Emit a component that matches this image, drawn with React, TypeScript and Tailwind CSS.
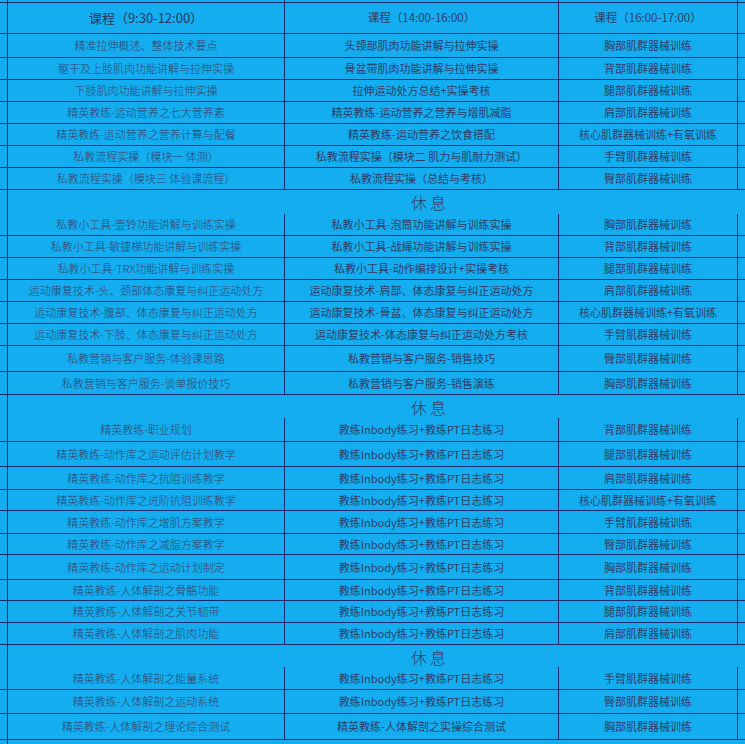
import React from 'react';

type Row = { kind: 'course'; h: number; a: string; b: string; c: string } | { kind: 'break'; h: number };

const GRID = 'grid grid-cols-[7px_276px_273px_178px_1fr] gap-x-px';

const course = (h: number, a: string, b: string, c: string): Row => ({ kind: 'course', h, a, b, c });
const rest = (h: number): Row => ({ kind: 'break', h });

const PT = '教练Inbody练习+教练PT日志练习';

const rows: Row[] = [
  course(24, '精准拉伸概述、整体技术要点', '头颈部肌肉功能讲解与拉伸实操', '胸部肌群器械训练'),
  course(22, '躯干及上肢肌肉功能讲解与拉伸实操', '骨盆带肌肉功能讲解与拉伸实操', '背部肌群器械训练'),
  course(22, '下肢肌肉功能讲解与拉伸实操', '拉伸运动处方总结+实操考核', '腿部肌群器械训练'),
  course(22, '精英教练-运动营养之七大营养素', '精英教练-运动营养之营养与增肌减脂', '肩部肌群器械训练'),
  course(22, '精英教练-运动营养之营养计算与配餐', '精英教练-运动营养之饮食搭配', '核心肌群器械训练+有氧训练'),
  course(22, '私教流程实操（模块一 体测）', '私教流程实操（模块二 肌力与肌耐力测试）', '手臂肌群器械训练'),
  course(22, '私教流程实操（模块三 体验课流程）', '私教流程实操（总结与考核）', '臀部肌群器械训练'),
  rest(24),
  course(22, '私教小工具-壶铃功能讲解与训练实操', '私教小工具-泡筒功能讲解与训练实操', '胸部肌群器械训练'),
  course(22, '私教小工具-敏捷梯功能讲解与训练实操', '私教小工具-战绳功能讲解与训练实操', '背部肌群器械训练'),
  course(22, '私教小工具-TRX功能讲解与训练实操', '私教小工具-动作编排设计+实操考核', '腿部肌群器械训练'),
  course(22, '运动康复技术-头、颈部体态康复与纠正运动处方', '运动康复技术-肩部、体态康复与纠正运动处方', '肩部肌群器械训练'),
  course(22, '运动康复技术-腹部、体态康复与纠正运动处方', '运动康复技术-骨盆、体态康复与纠正运动处方', '核心肌群器械训练+有氧训练'),
  course(22, '运动康复技术-下肢、体态康复与纠正运动处方', '运动康复技术-体态康复与纠正运动处方考核', '手臂肌群器械训练'),
  course(26, '私教营销与客户服务-体验课思路', '私教营销与客户服务-销售技巧', '臀部肌群器械训练'),
  course(23, '私教营销与客户服务-谈单报价技巧', '私教营销与客户服务-销售演练', '胸部肌群器械训练'),
  rest(23),
  course(24, '精英教练-职业规划', PT, '背部肌群器械训练'),
  course(25, '精英教练-动作库之运动评估计划教学', PT, '腿部肌群器械训练'),
  course(23, '精英教练-动作库之抗阻训练教学', PT, '肩部肌群器械训练'),
  course(21, '精英教练-动作库之进阶抗阻训练教学', PT, '核心肌群器械训练+有氧训练'),
  course(23, '精英教练-动作库之增肌方案教学', PT, '手臂肌群器械训练'),
  course(21, '精英教练-动作库之减脂方案教学', PT, '臀部肌群器械训练'),
  course(25, '精英教练-动作库之运动计划制定', PT, '胸部肌群器械训练'),
  course(21, '精英教练-人体解剖之骨骼功能', PT, '背部肌群器械训练'),
  course(22, '精英教练-人体解剖之关节韧带', PT, '腿部肌群器械训练'),
  course(22, '精英教练-人体解剖之肌肉功能', PT, '肩部肌群器械训练'),
  rest(22),
  course(23, '精英教练-人体解剖之能量系统', PT, '手臂肌群器械训练'),
  course(24, '精英教练-人体解剖之运动系统', PT, '臀部肌群器械训练'),
  course(26, '精英教练-人体解剖之理论综合测试', '精英教练-人体解剖之实操综合测试', '胸部肌群器械训练'),
  rest(24),
];

const Cell = ({ children, className = '' }: { children?: React.ReactNode; className?: string }) => (
  <div className={`bg-[#14adef] flex items-center justify-center whitespace-nowrap overflow-hidden ${className}`}>
    {children}
  </div>
);

export default function App() {
  return (
    <div
      className="w-[745px] h-[744px] overflow-hidden bg-[#14adef] text-[#2e3d68] flex flex-col"
      style={{ fontFamily: '"Noto Sans CJK SC", "Noto Sans", sans-serif' }}
    >
      {/* top sliver of the row above the header */}
      <div className={`${GRID} h-[3px] shrink-0 bg-[#1d2c72] pb-px`}>
        <Cell />
        <Cell />
        <Cell />
        <Cell />
        <Cell />
      </div>

      {/* header */}
      <div className={`${GRID} h-[31px] shrink-0 bg-[#1d2c72] pb-px`}>
        <Cell />
        <Cell className="text-[13px] text-[#263660]">课程（9:30-12:00）</Cell>
        <Cell className="text-[11.5px]">课程（14:00-16:00）</Cell>
        <Cell className="text-[11.5px]">课程（16:00-17:00）</Cell>
        <Cell />
      </div>

      {rows.map((r, i) =>
        r.kind === 'course' ? (
          <div key={i} className={`${GRID} shrink-0 bg-[#1d2c72] pb-px`} style={{ height: r.h }}>
            <Cell />
            <Cell className="text-[11px] font-light text-[#33436e]">{r.a}</Cell>
            <Cell className="text-[11px]">{r.b}</Cell>
            <Cell className="text-[11px]">{r.c}</Cell>
            <Cell />
          </div>
        ) : (
          <div key={i} className="grid grid-cols-[7px_1fr] gap-x-px shrink-0 bg-[#1d2c72] pb-px" style={{ height: r.h }}>
            <Cell />
            <div className="bg-[#14adef] flex items-center pl-[403px] text-[16px] font-light tracking-[3px] text-[#2e3d68]">
              休息
            </div>
          </div>
        )
      )}
    </div>
  );
}
